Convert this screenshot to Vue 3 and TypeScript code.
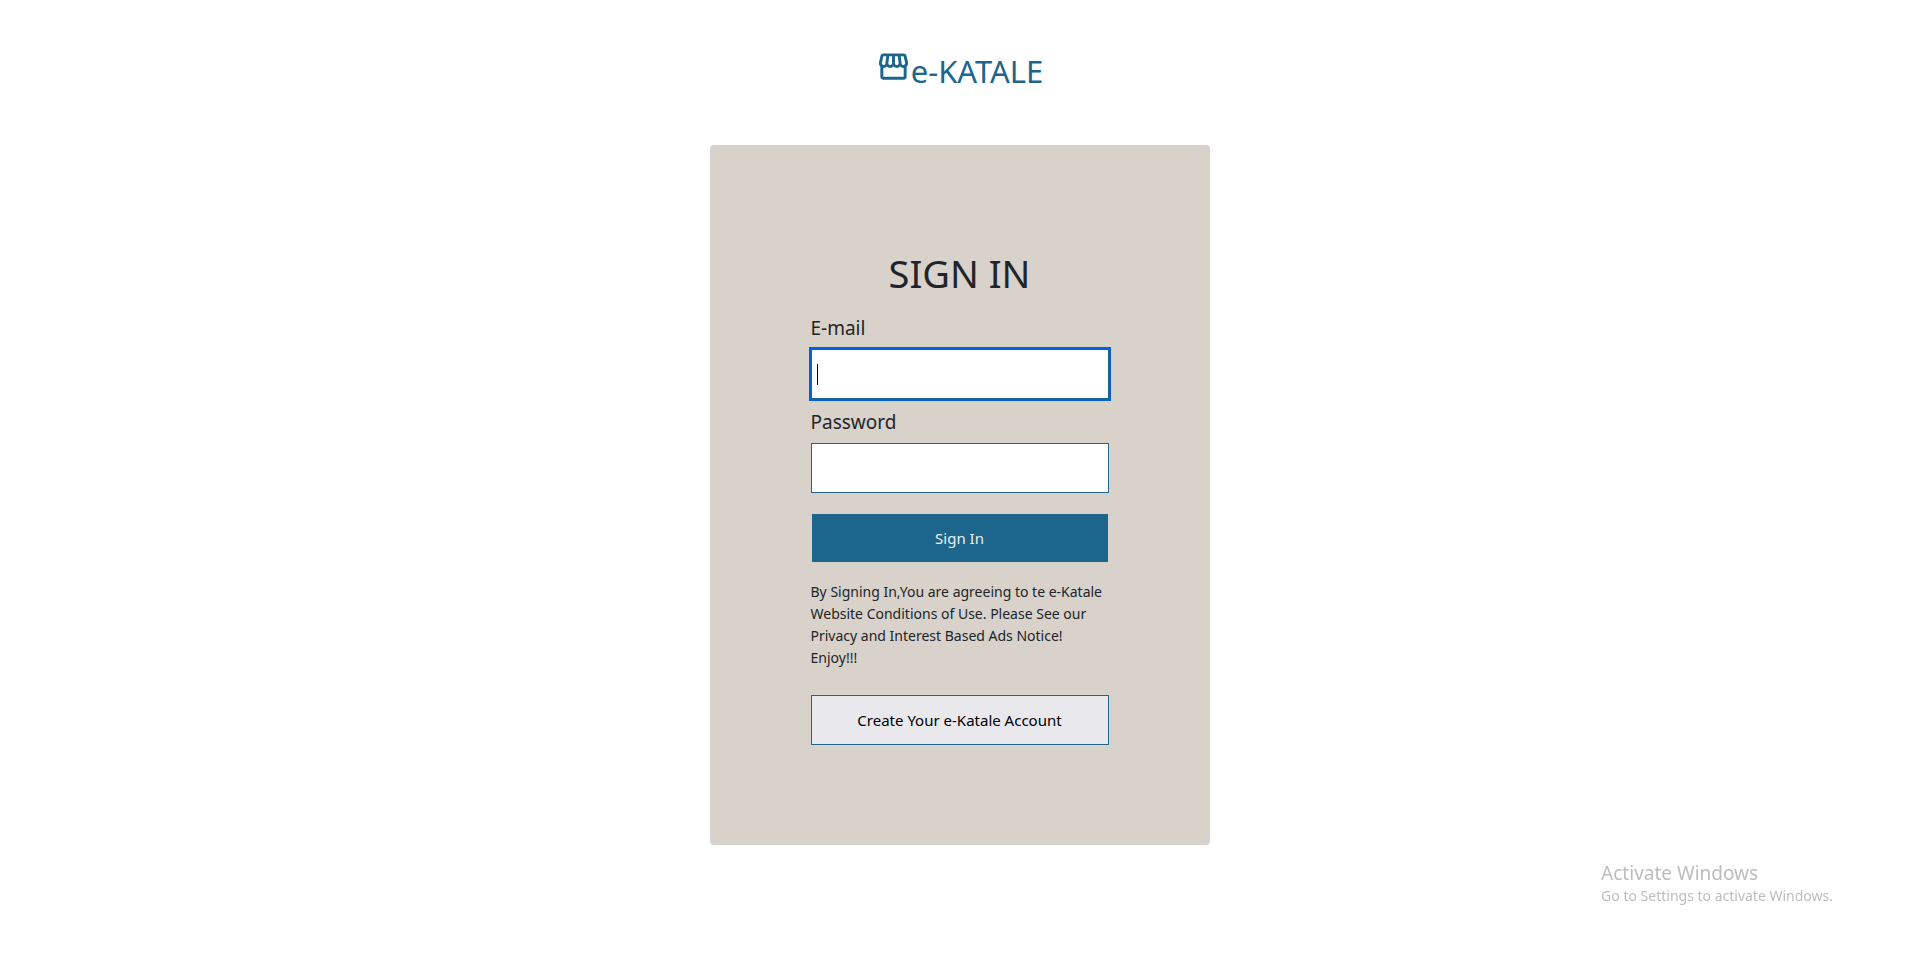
<script setup lang="ts">
import { ref, onMounted } from 'vue'

const email = ref('')
const password = ref('')
const emailFocused = ref(true)
const emailInput = ref<HTMLInputElement | null>(null)

onMounted(() => emailInput.value?.focus())
</script>

<template>
  <main class="page">
    <a class="brand" href="#">
      <svg class="brand-icon" viewBox="0 0 24 24" aria-hidden="true">
        <path
          d="M21.9 8.89l-1.05-4.37c-.22-.9-1-1.52-1.91-1.52H5.05c-.9 0-1.69.63-1.9 1.52L2.1 8.89c-.24 1.02-.02 2.06.62 2.88.08.11.19.19.28.29V19c0 1.1.9 2 2 2h14c1.1 0 2-.9 2-2v-6.94c.09-.09.2-.18.28-.28.64-.82.87-1.87.62-2.89zm-2.99-3.9l1.05 4.37c.1.42.01.84-.25 1.17-.14.18-.44.47-.94.47-.61 0-1.14-.49-1.21-1.14L16.98 5l1.93-.01zM13 5h1.96l.54 4.52c.05.39-.07.78-.33 1.07-.22.26-.54.41-.95.41-.67 0-1.22-.59-1.22-1.31V5zM8.49 9.52L9.04 5H11v4.69c0 .72-.55 1.31-1.29 1.31-.34 0-.65-.15-.89-.41-.25-.29-.37-.68-.33-1.07zm-4.45-.16L5.05 5h1.97l-.58 4.86c-.08.65-.6 1.14-1.21 1.14-.49 0-.8-.29-.93-.47-.27-.32-.36-.75-.26-1.17zM5 19v-6.03c.08.01.15.03.23.03.87 0 1.66-.36 2.24-.95.6.6 1.4.95 2.31.95.87 0 1.65-.36 2.23-.93.59.57 1.39.93 2.29.93.84 0 1.64-.35 2.24-.95.58.59 1.37.95 2.24.95.08 0 .15-.02.23-.03V19H5z"
        />
      </svg>
      <span class="brand-name">e-KATALE</span>
    </a>

    <form class="card" @submit.prevent>
      <h1 class="title">SIGN IN</h1>

      <label class="label" for="email">E-mail</label>
      <div class="field">
        <input
          id="email"
          ref="emailInput"
          v-model="email"
          class="input"
          :class="{ active: emailFocused }"
          type="text"
          @focus="emailFocused = true"
          @blur="emailFocused = false"
        />
        <span v-if="emailFocused && !email" class="caret" aria-hidden="true"></span>
      </div>

      <label class="label" for="password">Password</label>
      <div class="field">
        <input id="password" v-model="password" class="input" type="password" />
      </div>

      <button class="button primary" type="submit">Sign In</button>

      <p class="terms">
        By Signing In,You are agreeing to te e-Katale Website Conditions of Use. Please See our
        Privacy and Interest Based Ads Notice! Enjoy!!!
      </p>

      <button class="button secondary" type="button">Create Your e-Katale Account</button>
    </form>

    <aside class="watermark">
      <p class="watermark-title">Activate Windows</p>
      <p class="watermark-text">Go to Settings to activate Windows.</p>
    </aside>
  </main>
</template>

<style>
body {
  background: #fff;
}
</style>

<style scoped>
.page {
  display: flex;
  flex-direction: column;
  align-items: center;
  min-height: 100vh;
  box-sizing: border-box;
  padding: 48px 16px;
  color: #212529;
  font-family: "Segoe UI", "Noto Sans", "Open Sans", sans-serif;
}

.brand {
  display: flex;
  align-items: flex-start;
  color: #1c658c;
  text-decoration: none;
}

.brand-icon {
  width: 35px;
  height: 35px;
  margin-top: 1px;
  fill: currentColor;
}

.brand-name {
  font-size: 31px;
  line-height: 46px;
}

.card {
  display: flex;
  flex-direction: column;
  width: 100%;
  max-width: 500px;
  box-sizing: border-box;
  margin-top: 51px;
  padding: 100px 101px;
  border-radius: 4px;
  background: #d8d2cb;
}

.title {
  margin: 4px 0 8px;
  font-size: 38px;
  font-weight: 400;
  line-height: 48px;
  text-align: center;
}

.label {
  margin: 8px 0 6px;
  font-size: 19px;
  line-height: 30px;
}

.field {
  position: relative;
  display: flex;
}

.input {
  flex: 1;
  min-width: 0;
  height: 50px;
  box-sizing: border-box;
  padding: 0 5px;
  border: 1px solid #1c658c;
  border-radius: 0;
  outline: none;
  background: #fff;
  color: #212529;
  font: inherit;
  font-size: 16px;
}

.input:focus,
.input.active {
  outline: 2px solid #0060df;
  caret-color: transparent;
}

.caret {
  position: absolute;
  top: 15px;
  left: 6px;
  width: 1px;
  height: 21px;
  background: #000;
}

.button {
  height: 50px;
  padding: 0 8px;
  border: 1px solid #1c658c;
  border-radius: 0;
  font: inherit;
  font-size: 15px;
  line-height: 24px;
  cursor: pointer;
}

.primary {
  margin-top: 20px;
  border-color: #d8d2cb;
  background: #1c658c;
  color: #eee;
}

.secondary {
  background: #e9e8ed;
  color: #000;
}

.terms {
  margin: 18px 0 26px;
  font-size: 14px;
  line-height: 22px;
}

.watermark {
  position: fixed;
  right: 86px;
  bottom: 48px;
  color: #bdbdbd;
}

.watermark p {
  margin: 0;
}

.watermark-title {
  font-size: 19px;
  line-height: 26px;
}

.watermark-text {
  font-size: 14px;
  line-height: 20px;
}
</style>
